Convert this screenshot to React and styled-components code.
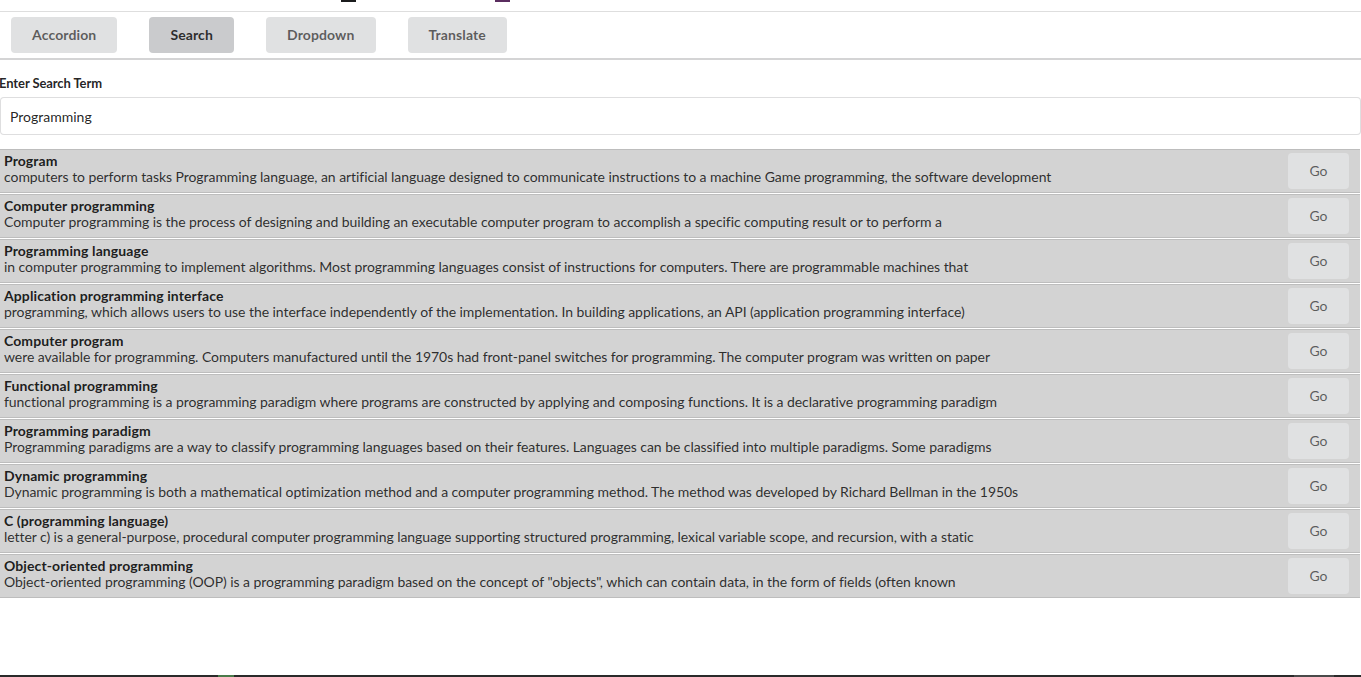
import styled, { createGlobalStyle } from "styled-components";

const results = [
    {
        title: "Program",
        snippet:
            "computers to perform tasks Programming language, an artificial language designed to communicate instructions to a machine Game programming, the software development",
    },
    {
        title: "Computer programming",
        snippet:
            "Computer programming is the process of designing and building an executable computer program to accomplish a specific computing result or to perform a",
    },
    {
        title: "Programming language",
        snippet:
            "in computer programming to implement algorithms. Most programming languages consist of instructions for computers. There are programmable machines that",
    },
    {
        title: "Application programming interface",
        snippet:
            "programming, which allows users to use the interface independently of the implementation. In building applications, an API (application programming interface)",
    },
    {
        title: "Computer program",
        snippet:
            "were available for programming. Computers manufactured until the 1970s had front-panel switches for programming. The computer program was written on paper",
    },
    {
        title: "Functional programming",
        snippet:
            "functional programming is a programming paradigm where programs are constructed by applying and composing functions. It is a declarative programming paradigm",
    },
    {
        title: "Programming paradigm",
        snippet:
            "Programming paradigms are a way to classify programming languages based on their features. Languages can be classified into multiple paradigms. Some paradigms",
    },
    {
        title: "Dynamic programming",
        snippet:
            "Dynamic programming is both a mathematical optimization method and a computer programming method. The method was developed by Richard Bellman in the 1950s",
    },
    {
        title: "C (programming language)",
        snippet:
            "letter c) is a general-purpose, procedural computer programming language supporting structured programming, lexical variable scope, and recursion, with a static",
    },
    {
        title: "Object-oriented programming",
        snippet:
            'Object-oriented programming (OOP) is a programming paradigm based on the concept of "objects", which can contain data, in the form of fields (often known',
    },
];

const tabs = ["Accordion", "Search", "Dropdown", "Translate"];

function App() {
    return (
        <>
            <GlobalStyle />
            <Page>
                <TopStrip>
                    <Blip color="#1b1c1d" />
                    <Blip color="#5a2d5f" />
                </TopStrip>
                <Menu>
                    {tabs.map((tab) => (
                        <Button key={tab} active={tab === "Search"}>
                            {tab}
                        </Button>
                    ))}
                </Menu>
                <Field>
                    <Label>Enter Search Term</Label>
                    <Input defaultValue="Programming" />
                </Field>
                <List>
                    {results.map((item) => (
                        <Item key={item.title}>
                            <Content>
                                <Header>{item.title}</Header>
                                <Description>{item.snippet}</Description>
                            </Content>
                            <GoButton>Go</GoButton>
                        </Item>
                    ))}
                </List>
                <Spacer />
                <BottomBar>
                    <BarChunk w="16px" offset="218px" color="#4a7a4a" />
                    <BarChunk w="40px" offset="1060px" color="#4a4a4a" />
                </BottomBar>
            </Page>
        </>
    );
}

export default App;

const GlobalStyle = createGlobalStyle`
    html, body {
        margin: 0;
        padding: 0;
        background: #fff;
    }
    body {
        font-family: Lato, "Open Sans", "Liberation Sans", sans-serif;
        font-size: 14px;
        color: rgba(0, 0, 0, 0.87);
    }
    * {
        box-sizing: border-box;
    }
`;

const Page = styled.div`
    min-height: 100vh;
    display: flex;
    flex-direction: column;
`;

const TopStrip = styled.div`
    height: 12px;
    border-bottom: 1px solid #dedede;
    display: flex;
    align-items: flex-start;
    gap: 139px;
    padding-left: 341px;
`;

const Blip = styled.div`
    width: 15px;
    height: 2px;
    background: ${(props) => props.color};
`;

const Menu = styled.div`
    display: flex;
    gap: 32px;
    padding: 5px 11px 5px;
    border-bottom: 2px solid #d4d4d5;
`;

const Button = styled.button`
    font-family: Lato, "Open Sans", "Liberation Sans", sans-serif;
    font-size: 14px;
    font-weight: 700;
    letter-spacing: 0.12px;
    line-height: 14px;
    height: 36px;
    padding: 0 21px;
    border: none;
    border-radius: 4px;
    background: ${(props) => (props.active ? "#cacbcd" : "#e0e1e2")};
    color: ${(props) => (props.active ? "rgba(0, 0, 0, 0.8)" : "rgba(0, 0, 0, 0.6)")};
    cursor: pointer;
`;

const Field = styled.div`
    display: flex;
    flex-direction: column;
    padding-top: 15px;
`;

const Label = styled.label`
    font-size: 13px;
    font-weight: 700;
    letter-spacing: -0.1px;
    line-height: 16px;
    margin-left: -1px;
    margin-bottom: 6px;
    color: rgba(0, 0, 0, 0.87);
`;

const Input = styled.input`
    font-family: Lato, "Open Sans", "Liberation Sans", sans-serif;
    font-size: 14px;
    height: 38px;
    width: 1361px;
    padding: 0 9px;
    border: 1px solid rgba(34, 36, 38, 0.15);
    border-radius: 4px;
    color: rgba(0, 0, 0, 0.87);
    outline: none;
`;

const List = styled.div`
    display: flex;
    flex-direction: column;
    gap: 1px;
    margin-top: 14px;
    width: 1360px;
`;

const Item = styled.div`
    display: flex;
    align-items: flex-start;
    justify-content: space-between;
    background: #d3d3d3;
    border-top: 1px solid #bdbdbd;
    border-bottom: 1px solid #bdbdbd;
    padding: 3px 11px 3px 4px;
`;

const Content = styled.div`
    display: flex;
    flex-direction: column;
`;

const Header = styled.div`
    font-size: 14px;
    font-weight: 700;
    letter-spacing: 0.1px;
    line-height: 16px;
    color: rgba(0, 0, 0, 0.87);
`;

const Description = styled.div`
    font-size: 14px;
    letter-spacing: -0.06px;
    line-height: 16px;
    color: rgba(0, 0, 0, 0.8);
`;

const GoButton = styled(Button)`
    flex-shrink: 0;
    width: 61px;
    padding: 0;
    font-weight: 400;
    letter-spacing: 0;
    background: #e0e1e2;
    color: rgba(0, 0, 0, 0.6);
`;

const Spacer = styled.div`
    flex: 1;
`;

const BottomBar = styled.div`
    height: 2px;
    background: #2a2a2a;
    display: flex;
`;

const BarChunk = styled.div`
    width: ${(props) => props.w};
    margin-left: ${(props) => props.offset};
    background: ${(props) => props.color};
    position: relative;
`;
